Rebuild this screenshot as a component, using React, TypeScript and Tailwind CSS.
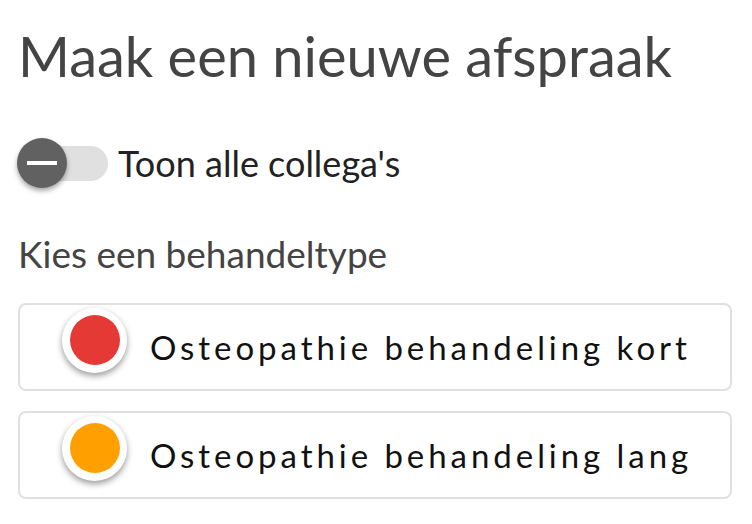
import React from "react";

const types = [
  { label: "Osteopathie behandeling kort", color: "bg-[#e53935]" },
  { label: "Osteopathie behandeling lang", color: "bg-[#ffa000]" },
];

export default function App() {
  return (
    <div className="w-[752px] h-[524px] bg-white px-[18px] font-['Lato',sans-serif] overflow-hidden">
      <h1 className="pt-[28px] text-[56px] leading-[56px] text-[#444444] font-normal">
        Maak een nieuwe afspraak
      </h1>
      <div className="mt-[54px] flex items-center h-[50px]">
        <div className="relative w-[90px] h-[50px] flex items-center">
          <div className="absolute left-[2px] right-0 h-[35px] rounded-full bg-[#e0e0e0]" />
          <div className="absolute left-[-1px] top-0 w-[50px] h-[50px] rounded-full bg-[#616161] shadow-[0_3px_5px_rgba(0,0,0,0.35)] flex items-center justify-center">
            <div className="w-[30px] h-[4px] bg-white" />
          </div>
        </div>
        <span className="ml-[10px] text-[36px] text-[#222222] leading-none">Toon alle collega's</span>
      </div>
      <div className="mt-[47px] text-[37px] leading-none text-[#444444]">Kies een behandeltype</div>
      <div className="mt-[31px] flex flex-col gap-[20px]">
        {types.map((t) => (
          <div
            key={t.label}
            className="h-[88px] w-[714px] rounded-[8px] border-2 border-[#e0e0e0] flex items-center pl-[42px]"
          >
            <div className="mb-[14px] w-[65px] h-[65px] rounded-full bg-white shadow-[0_3px_6px_rgba(0,0,0,0.4)] flex items-center justify-center shrink-0">
              <div className={`w-[50px] h-[50px] rounded-full ${t.color}`} />
            </div>
            <span className="ml-[23px] text-[33px] leading-none tracking-[3.95px] text-[#111111]">{t.label}</span>
          </div>
        ))}
      </div>
    </div>
  );
}
